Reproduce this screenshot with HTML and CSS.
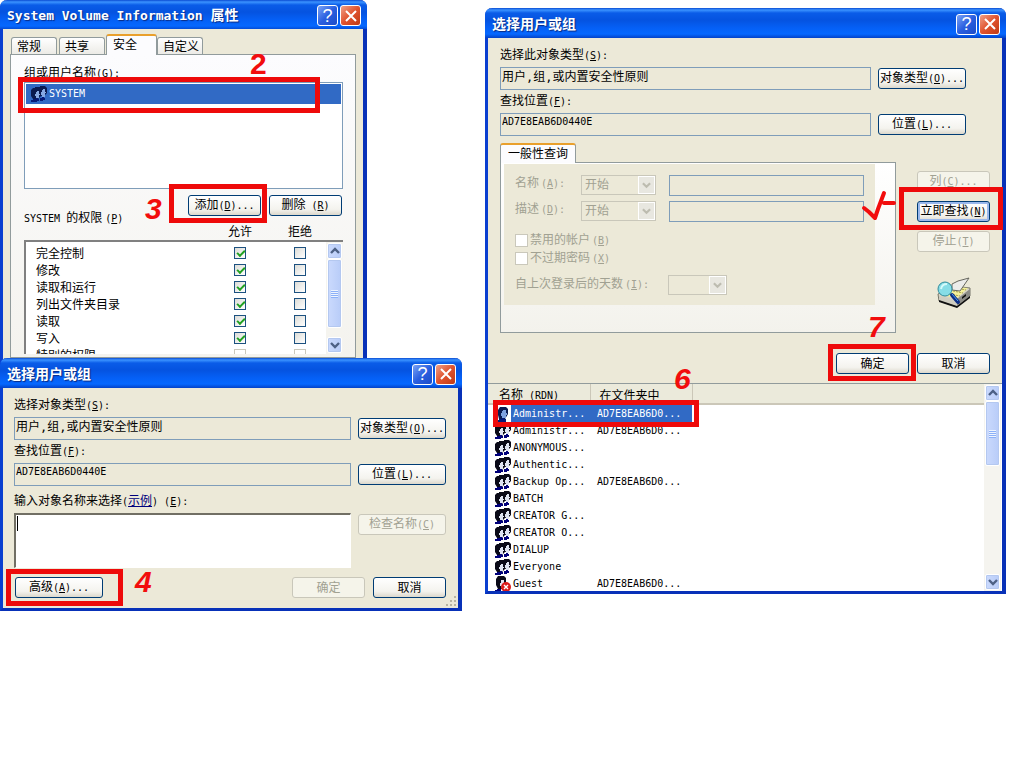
FILE: index.html
```html
<!DOCTYPE html>
<html lang="zh-CN">
<head>
<meta charset="utf-8">
<title>选择用户或组</title>
<link rel="stylesheet" href="styles.css">
</head>
<body>
<svg class="sprite" aria-hidden="true">
  <symbol id="users" viewBox="0 0 16 16">
    <path fill="#0a0a18" d="M2 2h2V1h5V0h5l2 2v5l-2 2-4 1-3 3H2L0 10V4z"/>
    <path fill="#dfe4f2" d="M6 5h2v3h1v1H8v3H5v-2H4V8h1V6h1zM12 3h2v3h1v1h-1v4h-3V9h-1V6h1V4h1z"/>
    <path fill="#00007a" d="M0 14h2v-1h3v-1h2v1h1v2H6v1H0zM9 12h2v-1h2v1h1v2h-2v1H9z"/>
  </symbol>
  <symbol id="users-picked" viewBox="0 0 16 16">
    <path fill="#0a1a50" d="M2 2h2V1h5V0h5l2 2v5l-2 2-4 1-3 3H2L0 10V4z"/>
    <path fill="#86a9e4" d="M6 5h2v3h1v1H8v3H5v-2H4V8h1V6h1zM12 3h2v3h1v1h-1v4h-3V9h-1V6h1V4h1z"/>
    <path fill="#061a78" d="M0 14h2v-1h3v-1h2v1h1v2H6v1H0zM9 12h2v-1h2v1h1v2h-2v1H9z"/>
  </symbol>
  <symbol id="user-picked" viewBox="0 0 16 16">
    <path fill="#0a1a50" d="M5 1h6l2 2v5l-3 5H4L3 9V4z"/>
    <path fill="#7fa2e0" d="M8 4h3v3h1v2h-1v3H7v-2H6V7h1V5h1z"/>
    <path fill="#061a78" d="M2 14h2v-1h3v-1h2v1h2v3H2z"/>
  </symbol>
  <symbol id="guest" viewBox="0 0 16 16">
    <path fill="#0a0a18" d="M3 0h6l2 2v4l-4 7H3l-2-4V3z"/>
    <path fill="#dfe4f2" d="M6 4h3v3h1v2H9v3H6v-2H5V7h1z"/>
    <path fill="#00007a" d="M0 14h2v-1h4v3H0z"/>
    <circle cx="11" cy="11" r="5" fill="#dc1c1c"/>
    <path stroke="#fff" stroke-width="1.4" d="M9 9l4 4M13 9l-4 4"/>
  </symbol>
  <symbol id="up" viewBox="0 0 10 10"><path fill="none" stroke="#4d6185" stroke-width="2.4" d="M1 7l4-4 4 4"/></symbol>
  <symbol id="down" viewBox="0 0 10 10"><path fill="none" stroke="#4d6185" stroke-width="2.4" d="M1 3l4 4 4-4"/></symbol>
  <symbol id="down-off" viewBox="0 0 10 10"><path fill="none" stroke="#bdbcb0" stroke-width="2.4" d="M1 3l4 4 4-4"/></symbol>
  <symbol id="cross" viewBox="0 0 12 12"><path stroke="#fff" stroke-width="2" d="M1 1l10 10M11 1L1 11"/></symbol>
</svg>

<main class="desktop">
  <section class="window props">
    <header class="titlebar">
      <h1><span class="en">System Volume Information </span>属性</h1>
      <button class="cap" aria-label="帮助">?</button>
      <button class="cap close" aria-label="关闭"><svg><use href="#cross"/></svg></button>
    </header>
    <div class="props-body">
      <nav class="tabs">
        <button class="tab">常规</button>
        <button class="tab">共享</button>
        <button class="tab active">安全</button>
        <button class="tab">自定义</button>
      </nav>
      <div class="sheet">
        <p class="label">组或用户名称<span class="en">(<u>G</u>):</span></p>
        <ul class="principals">
          <li><svg class="ico"><use href="#users-picked"/></svg><span class="en">SYSTEM</span></li>
        </ul>
        <div class="actions">
          <button class="btn">添加<span class="en">(<u>D</u>)...</span></button>
          <button class="btn">删除<span class="en"> (<u>R</u>)</span></button>
        </div>
        <p class="label"><span class="en">SYSTEM </span>的权限<span class="en">(<u>P</u>)</span></p>
        <div class="perm-head"><span>允许</span><span>拒绝</span></div>
        <div class="perm-box">
          <table class="perms">
            <tr><td>完全控制</td><td><input type="checkbox" aria-label="允许 完全控制" checked></td><td><input type="checkbox" aria-label="拒绝 完全控制"></td></tr>
            <tr><td>修改</td><td><input type="checkbox" aria-label="允许 修改" checked></td><td><input type="checkbox" aria-label="拒绝 修改"></td></tr>
            <tr><td>读取和运行</td><td><input type="checkbox" aria-label="允许 读取和运行" checked></td><td><input type="checkbox" aria-label="拒绝 读取和运行"></td></tr>
            <tr><td>列出文件夹目录</td><td><input type="checkbox" aria-label="允许 列出文件夹目录" checked></td><td><input type="checkbox" aria-label="拒绝 列出文件夹目录"></td></tr>
            <tr><td>读取</td><td><input type="checkbox" aria-label="允许 读取" checked></td><td><input type="checkbox" aria-label="拒绝 读取"></td></tr>
            <tr><td>写入</td><td><input type="checkbox" aria-label="允许 写入" checked></td><td><input type="checkbox" aria-label="拒绝 写入"></td></tr>
            <tr><td>特别的权限</td><td><input type="checkbox" aria-label="允许 特别的权限" disabled></td><td><input type="checkbox" aria-label="拒绝 特别的权限" disabled></td></tr>
          </table>
          <div class="scroll">
            <button aria-label="向上"><svg><use href="#up"/></svg></button>
            <div class="thumb perm-thumb"></div>
            <div class="track"></div>
            <button aria-label="向下"><svg><use href="#down"/></svg></button>
          </div>
        </div>
      </div>
    </div>
  </section>

  <section class="window picker">
    <header class="titlebar">
      <h1>选择用户或组</h1>
      <button class="cap" aria-label="帮助">?</button>
      <button class="cap close" aria-label="关闭"><svg><use href="#cross"/></svg></button>
    </header>
    <div class="picker-body">
      <div class="form">
        <label class="label" for="p-type">选择对象类型<span class="en">(<u>S</u>):</span></label>
        <input class="field" id="p-type" value="用户,组,或内置安全性原则" readonly>
        <button class="btn">对象类型<span class="en">(<u>O</u>)...</span></button>
        <label class="label" for="p-loc">查找位置<span class="en">(<u>F</u>):</span></label>
        <input class="field small" id="p-loc" value="AD7E8EAB6D0440E" readonly>
        <button class="btn">位置<span class="en">(<u>L</u>)...</span></button>
        <label class="label names-label" for="p-names">输入对象名称来选择<span class="en">(</span><a href="#example">示例</a><span class="en">) (<u>E</u>):</span></label>
        <div class="names-wrap"><textarea class="names" id="p-names"></textarea><span class="caret"></span></div>
        <button class="btn" disabled>检查名称<span class="en">(<u>C</u>)</span></button>
      </div>
      <div class="foot">
        <button class="btn wide">高级<span class="en">(<u>A</u>)...</span></button>
        <span class="space"></span>
        <button class="btn" disabled>确定</button>
        <button class="btn">取消</button>
      </div>
    </div>
    <svg class="grip" viewBox="0 0 12 12"><path fill="#b8b4a2" d="M8 0h2v2H8zM4 4h2v2H4zM8 4h2v2H8zM0 8h2v2H0zM4 8h2v2H4zM8 8h2v2H8z"/></svg>
  </section>

  <section class="window finder">
    <header class="titlebar">
      <h1>选择用户或组</h1>
      <button class="cap" aria-label="帮助">?</button>
      <button class="cap close" aria-label="关闭"><svg><use href="#cross"/></svg></button>
    </header>
    <div class="finder-body">
      <div class="form">
        <label class="label" for="f-type">选择此对象类型<span class="en">(<u>S</u>):</span></label>
        <input class="field" id="f-type" value="用户,组,或内置安全性原则" readonly>
        <button class="btn">对象类型<span class="en">(<u>O</u>)...</span></button>
        <label class="label" for="f-loc">查找位置<span class="en">(<u>F</u>):</span></label>
        <input class="field small" id="f-loc" value="AD7E8EAB6D0440E" readonly>
        <button class="btn">位置<span class="en">(<u>L</u>)...</span></button>
      </div>
      <div class="search">
        <div class="query">
          <nav class="tabs"><button class="tab active">一般性查询</button></nav>
          <div class="query-sheet">
            <div class="query-form">
              <div class="line">
                <label for="q-name">名称<span class="en">(<u>A</u>):</span></label>
                <div class="combo"><select id="q-name" disabled><option>开始</option></select><svg><use href="#down-off"/></svg></div>
                <input class="text" aria-label="名称" disabled>
              </div>
              <div class="line">
                <label for="q-desc">描述<span class="en">(<u>D</u>):</span></label>
                <div class="combo"><select id="q-desc" disabled><option>开始</option></select><svg><use href="#down-off"/></svg></div>
                <input class="text" aria-label="描述" disabled>
              </div>
              <div class="ticks">
                <label><input type="checkbox" disabled><span>禁用的帐户<span class="en">(<u>B</u>)</span></span></label>
                <label><input type="checkbox" disabled><span>不过期密码<span class="en">(<u>X</u>)</span></span></label>
              </div>
              <div class="line days">
                <label for="q-days">自上次登录后的天数<span class="en">(<u>I</u>):</span></label>
                <div class="combo"><select id="q-days" disabled><option></option></select><svg><use href="#down-off"/></svg></div>
              </div>
            </div>
          </div>
        </div>
        <div class="side">
          <button class="btn" disabled>列<span class="en">(<u>C</u>)...</span></button>
          <button class="btn focus">立即查找<span class="en">(<u>N</u>)</span></button>
          <button class="btn" disabled>停止<span class="en">(<u>T</u>)</span></button>
          <svg class="find" viewBox="0 0 34 32">
            <path fill="#d8d5c5" stroke="#77776a" d="M1 17l15-8 17 2v8L20 30 2 24z"/>
            <path fill="#f4ef9a" d="M4 17l12-7 15 1-12 11z"/>
            <path stroke="#a5a24c" stroke-width="1" fill="none" stroke-dasharray="2 1" d="M19 11l10 2M16 14l10 2M13 17l10 2"/>
            <path fill="#8b8b86" d="M20 22l13-10v7L20 29z"/>
            <path fill="#cfcdc0" d="M2 19l18 4v6L2 24z"/>
            <path fill="#111" d="M2 23l18 6 13-10v2L20 31 2 25zM25 20l4-3v2l-4 3z"/>
            <path fill="#ececea" stroke="#66665e" d="M15 7l6-3 11-3-9 13-8-1z"/>
            <path stroke="#0b2d86" stroke-width="4" stroke-linecap="round" d="M15 18l6 7"/>
            <path stroke="#4da0f0" stroke-width="1" d="M15 17l6 7"/>
            <circle cx="8" cy="12" r="7" fill="#86dde6" stroke="#318c9c"/>
            <path stroke="#d4fafa" stroke-width="2" fill="none" d="M4 12q1-5 6-5"/>
          </svg>
        </div>
      </div>
      <div class="foot">
        <span class="space"></span>
        <button class="btn">确定</button>
        <button class="btn">取消</button>
      </div>
    </div>
    <div class="results">
      <div class="results-view">
        <table>
          <thead><tr><th>名称<span class="en"> (RDN)</span></th><th>在文件夹中</th><th></th></tr></thead>
          <tbody class="en">
            <tr class="picked"><td><svg class="ico"><use href="#user-picked"/></svg><span>Administr...</span></td><td>AD7E8EAB6D0...</td><td></td></tr>
            <tr><td><svg class="ico"><use href="#users"/></svg><span>Administr...</span></td><td>AD7E8EAB6D0...</td><td></td></tr>
            <tr><td><svg class="ico"><use href="#users"/></svg><span>ANONYMOUS...</span></td><td></td><td></td></tr>
            <tr><td><svg class="ico"><use href="#users"/></svg><span>Authentic...</span></td><td></td><td></td></tr>
            <tr><td><svg class="ico"><use href="#users"/></svg><span>Backup Op...</span></td><td>AD7E8EAB6D0...</td><td></td></tr>
            <tr><td><svg class="ico"><use href="#users"/></svg><span>BATCH</span></td><td></td><td></td></tr>
            <tr><td><svg class="ico"><use href="#users"/></svg><span>CREATOR G...</span></td><td></td><td></td></tr>
            <tr><td><svg class="ico"><use href="#users"/></svg><span>CREATOR O...</span></td><td></td><td></td></tr>
            <tr><td><svg class="ico"><use href="#users"/></svg><span>DIALUP</span></td><td></td><td></td></tr>
            <tr><td><svg class="ico"><use href="#users"/></svg><span>Everyone</span></td><td></td><td></td></tr>
            <tr><td><svg class="ico"><use href="#guest"/></svg><span>Guest</span></td><td>AD7E8EAB6D0...</td><td></td></tr>
          </tbody>
        </table>
      </div>
      <div class="scroll">
        <button aria-label="向上"><svg><use href="#up"/></svg></button>
        <div class="thumb result-thumb"></div>
        <div class="track"></div>
        <button aria-label="向下"><svg><use href="#down"/></svg></button>
      </div>
    </div>
  </section>

  <div class="mark box-2"></div><span class="mark num num-2">2</span>
  <div class="mark box-3"></div><span class="mark num num-3">3</span>
  <div class="mark box-4"></div><span class="mark num num-4">4</span>
  <div class="mark box-5"></div>
  <svg class="mark tick" viewBox="0 0 36 32"><path fill="none" stroke="#f20d0d" stroke-width="4" stroke-linecap="round" stroke-linejoin="round" d="M3 18l5 4 6 6 3-9 6-16M23 13h10"/></svg>
  <div class="mark box-6"></div><span class="mark num num-6">6</span>
  <div class="mark box-7"></div><span class="mark num num-7">7</span>
</main>
</body>
</html>
```

FILE: styles.css
```css
* { box-sizing: border-box; }

body {
  margin: 0;
  background: #fff;
  color: #000;
  font: 12px/16px "Noto Sans CJK SC", sans-serif;
}

button, input, select, textarea {
  margin: 0;
  padding: 0;
  font: inherit;
  color: inherit;
}

p, h1, ul { margin: 0; padding: 0; }

.en {
  font-family: "DejaVu Sans Mono", "Liberation Mono", monospace;
  font-size: 10px;
  white-space: pre;
}

.sprite { position: absolute; width: 0; height: 0; }
.ico { width: 16px; height: 16px; flex: none; }
.space { flex: 1; }

.desktop {
  position: relative;
  min-height: 100vh;
  overflow: hidden;
}

/* Windows */
.window {
  position: absolute;
  display: flex;
  flex-direction: column;
  background: #ece9d8;
  border: solid #0a3fd0;
  border-width: 0 4px 3px 3px;
  border-right-color: #0831b8;
  border-bottom-color: #0831b8;
  border-radius: 7px 7px 0 0;
}
.props { left: 0; top: 0; width: 367px; height: 370px; }
.picker { left: 0; top: 358px; width: 462px; }
.finder { left: 485px; top: 8px; width: 521px; }

.titlebar {
  display: flex;
  align-items: center;
  gap: 2px;
  height: 30px;
  margin: 0 -4px 0 -3px;
  padding: 2px 6px 0 7px;
  border-radius: 7px 7px 0 0;
  background: linear-gradient(#0a4bd2 0, #3b93ff 2px, #0a5ce8 5px, #0553e0 12px, #0560f6 20px, #0668ff 26px, #0442c8 30px);
}
.props .titlebar { height: 29px; }
.titlebar h1 {
  flex: 1;
  padding-bottom: 2px;
  color: #fff;
  font-size: 14px;
  line-height: 20px;
  font-weight: bold;
  text-shadow: 1px 1px 1px #0a2a80;
}
.titlebar .en { font-size: 13px; }

.cap {
  display: flex;
  align-items: center;
  justify-content: center;
  width: 21px;
  height: 21px;
  border: 1px solid #fff;
  border-radius: 3px;
  background: linear-gradient(135deg, #7ba3f5, #2a5fe0 50%, #1c4cc8);
  color: #fff;
  font: 18px/18px "Liberation Sans", sans-serif;
}
.cap.close { background: linear-gradient(135deg, #f0a088, #e0532e 50%, #c03a14); }
.cap svg { width: 12px; height: 12px; }

/* Controls */
.btn {
  height: 21px;
  padding-bottom: 2px;
  border: 1px solid #003c74;
  border-radius: 3px;
  background: linear-gradient(#fff, #f4f3ee 70%, #dcd8cc);
  line-height: 16px;
  text-align: center;
  white-space: nowrap;
}
.btn:disabled {
  border-color: #c9c7ba;
  background: #f5f4ea;
  color: #a1a192;
}
.btn.focus {
  border-color: #003c74;
  box-shadow: inset 0 0 0 2px #9ab8ec;
}

.label { display: block; line-height: 16px; }
.label .en { padding-left: 3px; }
.label .en:first-child, .names-label .en { padding-left: 0; }

.field {
  height: 23px;
  min-width: 0;
  padding: 0 1px 6px;
  border: 1px solid #7f9db9;
  background: transparent;
  font-family: "DejaVu Sans Mono", "Noto Sans CJK SC", monospace;
}
.field.small { font-size: 10px; }

input[type="checkbox"] {
  appearance: none;
  position: relative;
  display: block;
  width: 12px;
  height: 12px;
  border: 1px solid #1c5180;
  background: linear-gradient(135deg, #dcdcd7, #fff);
}
input[type="checkbox"]:disabled { border-color: #cac8bb; background: #fff; }
input[type="checkbox"]:checked::after {
  content: "";
  position: absolute;
  left: 2px;
  top: 2px;
  width: 6px;
  height: 3px;
  border: solid #21a121;
  border-width: 0 0 2px 2px;
  transform: rotate(-45deg);
}

.tabs { display: flex; align-items: flex-end; gap: 2px; }
.tab {
  height: 17px;
  padding: 0 5px;
  border: 1px solid #919b9c;
  border-bottom: 0;
  border-radius: 3px 3px 0 0;
  background: linear-gradient(#fff, #ecebe6);
  text-align: left;
  line-height: 16px;
  white-space: nowrap;
}
.tab.active {
  position: relative;
  height: 20px;
  margin-bottom: -1px;
  border-top: 2px solid #e9a02c;
  background: #fcfcfe;
}

.scroll {
  display: flex;
  flex-direction: column;
  width: 17px;
  padding: 1px;
  background: #f5f4ef;
}
.scroll button, .thumb {
  border: 1px solid #fff;
  border-radius: 2px;
  background: linear-gradient(90deg, #cbdafd, #b8ccf8);
  box-shadow: 0 0 0 1px #b4c8f0 inset;
}
.scroll button { display: flex; align-items: center; justify-content: center; height: 16px; }
.scroll svg { width: 10px; height: 10px; }
.thumb { display: flex; align-items: center; justify-content: center; }
.thumb::after {
  content: "";
  width: 7px;
  height: 8px;
  background: repeating-linear-gradient(#eef4fe 0 1px, #8cb0f8 1px 2px);
}
.track { flex: 1; }
.perm-thumb { height: 69px; }
.result-thumb { height: 65px; }

/* Properties window */
.props-body { flex: 1; padding: 6px 7px 0; }
.props .tabs { height: 19px; padding-left: 1px; }
.props .tab { width: 46px; }
.props .tab.active { width: 51px; height: 21px; padding: 0 6px 3px; margin-left: -1px; margin-right: -2px; }
.sheet {
  height: 304px;
  padding: 10px 12px 0 13px;
  border: 1px solid #919b9c;
  background: linear-gradient(#fcfcfe, #f4f3ee);
}
.sheet > .label:first-child { height: 17px; line-height: 14px; }
.sheet > .label:first-child .en { padding-left: 0; }
.principals {
  height: 107px;
  padding: 1px;
  border: 1px solid #7f9db9;
  background: #fff;
  list-style: none;
}
.principals li {
  display: flex;
  align-items: center;
  height: 20px;
  padding: 0 0 1px 5px;
  background: #316ac5;
  color: #fff;
}
.principals .en { padding-left: 2px; }
.actions { display: flex; justify-content: flex-end; gap: 8px; padding: 6px 1px 0; }
.actions .btn { width: 73px; }
.actions + .label { margin-top: -7px; }
.perm-head {
  display: grid;
  grid-template-columns: 68px 52px;
  justify-content: end;
  justify-items: center;
  height: 13px;
  padding-right: 17px;
  line-height: 8px;
}
.perm-box {
  display: flex;
  height: 114px;
  overflow: hidden;
  border: solid #808080;
  border-width: 2px 0 0 2px;
  background: #fff;
}
.perms { flex: 1; border-collapse: collapse; table-layout: fixed; align-self: flex-start; margin-top: 2px; }
.perms td { height: 17px; padding: 0; line-height: 17px; }
.perms td:first-child { padding-left: 10px; }
.perms td:nth-child(2) { width: 68px; }
.perms td:nth-child(3) { width: 52px; }
.perms input { margin: 0 auto; }

/* Select users window */
.picker-body { padding: 9px 12px 10px 11px; }
.form {
  display: grid;
  grid-template-columns: 1fr 88px;
  column-gap: 7px;
  align-items: center;
}
.form .label { grid-column: 1 / -1; height: 20px; line-height: 14px; }
.form .label + .field { margin-bottom: 3px; }
.form .field + .btn { margin-bottom: 3px; }
.form .names-label { height: 24px; padding-top: 4px; }
.names-wrap { position: relative; height: 55px; }
.names {
  width: 100%;
  height: 100%;
  display: block;
  resize: none;
  border: 1px solid #fff;
  border-top: 2px solid #716f64;
  border-left: 2px solid #716f64;
  background: #fff;
}
.caret { position: absolute; left: 3px; top: 3px; width: 1px; height: 15px; background: #000; }
.names-wrap + .btn { align-self: start; margin-top: 1px; }
.form a { color: #00007c; }
.foot { display: flex; gap: 8px; padding-top: 9px; }
.foot .btn { width: 73px; }
.foot .btn.wide { width: 88px; margin-left: 1px; }
.grip { position: absolute; right: 0; bottom: 0; width: 12px; height: 12px; }

/* Search window */
.finder-body { padding: 9px 12px 9px; }
.finder .form { padding-right: 24px; }
.search { display: flex; gap: 21px; padding-top: 4px; }
.query { flex: 1; }
.query .tab { padding: 0 7px 3px; }
.query-sheet {
  height: 171px;
  padding: 1px 20px 0 3px;
  border: 1px solid #919b9c;
  background: linear-gradient(#fff, #f3f2ec);
}
.query-form {
  height: 141px;
  padding: 10px 11px 0;
  background: #ece9d8;
  color: #a1a192;
}
.line { display: flex; align-items: center; margin-bottom: 4px; }
.line label { width: 66px; padding-bottom: 4px; }
.line label .en, .ticks .en { padding-left: 2px; }
.line .text { flex: 1; min-width: 0; height: 21px; margin-left: 13px; border: 1px solid #7f9db9; background: transparent; }
.combo { position: relative; width: 75px; height: 20px; }
.combo select {
  appearance: none;
  width: 100%;
  height: 100%;
  padding: 0 0 2px 3px;
  border: 1px solid #c9c7ba;
  border-radius: 0;
  background: #ece9d8;
  color: #a1a192;
  opacity: 1;
}
.combo svg {
  position: absolute;
  right: 1px;
  top: 1px;
  width: 17px;
  height: 18px;
  padding: 3px;
  border: 1px solid #fff;
  background: #e8e7e0;
}
.ticks { padding-top: 5px; }
.ticks label { display: flex; align-items: center; gap: 2px; height: 18px; }
.ticks input { width: 13px; height: 13px; }
.days { padding-top: 8px; }
.days label { width: 153px; padding-bottom: 2px; }
.days .combo { width: 59px; }

.side { display: flex; flex-direction: column; align-items: center; gap: 9px; width: 73px; padding-top: 28px; }
.side .btn { width: 73px; }
.find { width: 34px; height: 32px; margin-top: 16px; }
.search + .foot { padding-top: 20px; }

.results { display: flex; height: 208px; border-top: 1px solid #919b9c; background: #fff; }
.results .scroll { margin-right: 1px; }
.results-view { flex: 1; min-width: 0; overflow: hidden; }
.results table { width: 100%; border-collapse: collapse; table-layout: fixed; }
.results th {
  height: 20px;
  padding: 2px 0 0 11px;
  border-bottom: 2px solid #cbc7b8;
  border-right: 1px solid #cbc7b8;
  background: #ebeadb;
  font-weight: normal;
  line-height: 15px;
  text-align: left;
}
.results th:nth-child(-n+2) { width: 102px; }
.results th:nth-child(2) { padding-left: 9px; }
.results th:last-child { border-right: 0; }
.results td { height: 17px; padding: 0 0 0 7px; line-height: 16px; }
.results td:first-child { display: flex; align-items: center; }
.results td span { padding-left: 2px; }
.picked td { background: #316ac5; color: #fff; }
.picked td:first-child { background: linear-gradient(90deg, #fff 23px, #316ac5 23px); }
.picked td:last-child { background: #fff; }

/* Red marks drawn over the windows */
.mark { position: absolute; pointer-events: none; }
div.mark { border: 5px solid #ee0a0a; }
.box-2 { left: 18px; top: 77px; width: 302px; height: 36px; }
.box-3 { left: 169px; top: 184px; width: 98px; height: 39px; }
.box-4 { left: 6px; top: 569px; width: 117px; height: 37px; }
.box-5 { left: 899px; top: 187px; width: 104px; height: 43px; }
.box-6 { left: 493px; top: 400px; width: 206px; height: 27px; }
.box-7 { left: 828px; top: 344px; width: 88px; height: 37px; }
.num { color: #f20d0d; font: bold 30px/32px "Liberation Sans", sans-serif; }
.num-2 { left: 250px; top: 48px; }
.num-3 { left: 145px; top: 193px; font-style: italic; }
.num-4 { left: 135px; top: 566px; font-style: italic; }
.num-6 { left: 674px; top: 363px; font-style: italic; }
.num-7 { left: 868px; top: 311px; font-style: italic; }
.tick { left: 861px; top: 190px; width: 36px; height: 32px; }
```
